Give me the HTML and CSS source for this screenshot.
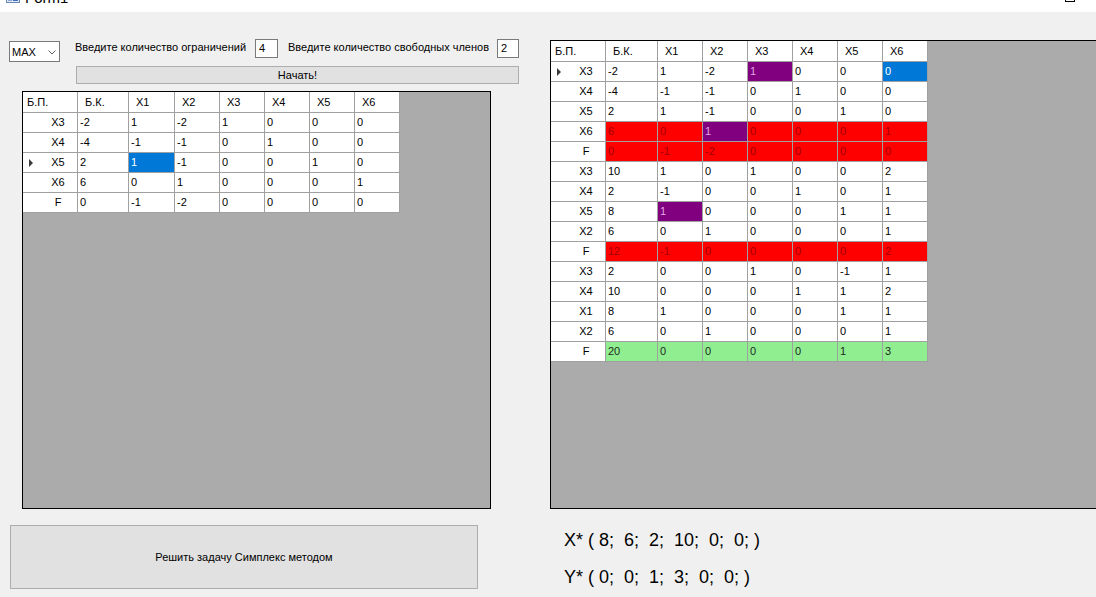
FILE: index.html
```html
<!DOCTYPE html>
<html lang="ru">
<head>
<meta charset="utf-8">
<title>Form1</title>
<link rel="stylesheet" href="styles.css">
</head>
<body>
<div class="titlebar">
  <div class="title-inner">
    <svg class="app-icon" width="14" height="12" viewBox="0 0 14 12"><rect x="0.5" y="0.5" width="13" height="11" fill="#dfe8f5" stroke="#6b86b3"/><rect x="2" y="3" width="4" height="7" fill="#8fa9d6"/><rect x="7" y="3" width="5" height="7" fill="#3d6fc2"/></svg>
    <span class="title-text">Form1</span>
    <span class="spacer"></span>
    <span class="max-box"></span>
  </div>
</div>
<div class="main">
  <div class="left">
    <div class="controls">
      <div class="combo"><span>MAX</span><svg width="8" height="5" viewBox="0 0 8 5"><path d="M0.5 0.5 L4 4 L7.5 0.5" fill="none" stroke="#606060" stroke-width="1"/></svg></div>
      <span class="label l1">Введите количество ограничений</span>
      <div class="input i1">4</div>
      <span class="label l2">Введите количество свободных членов</span>
      <div class="input i2">2</div>
    </div>
    <div class="btn start">Начать!</div>
    <div class="gridbox lbox">
      <div class="dgv dl">
        <div class="h h0">Б.П.</div><div class="h">Б.К.</div><div class="h">X1</div><div class="h">X2</div><div class="h">X3</div><div class="h">X4</div><div class="h">X5</div><div class="h">X6</div>
        <div class="rh"><span class="ind"></span><span class="rt">X3</span></div><div class="c">-2</div><div class="c">1</div><div class="c">-2</div><div class="c">1</div><div class="c">0</div><div class="c">0</div><div class="c">0</div>
        <div class="rh"><span class="ind"></span><span class="rt">X4</span></div><div class="c">-4</div><div class="c">-1</div><div class="c">-1</div><div class="c">0</div><div class="c">1</div><div class="c">0</div><div class="c">0</div>
        <div class="rh"><span class="ind"><i class="arrow"></i></span><span class="rt">X5</span></div><div class="c">2</div><div class="c b">1</div><div class="c">-1</div><div class="c">0</div><div class="c">0</div><div class="c">1</div><div class="c">0</div>
        <div class="rh"><span class="ind"></span><span class="rt">X6</span></div><div class="c">6</div><div class="c">0</div><div class="c">1</div><div class="c">0</div><div class="c">0</div><div class="c">0</div><div class="c">1</div>
        <div class="rh"><span class="ind"></span><span class="rt">F</span></div><div class="c">0</div><div class="c">-1</div><div class="c">-2</div><div class="c">0</div><div class="c">0</div><div class="c">0</div><div class="c">0</div>
      </div>
    </div>
    <div class="btn solve">Решить задачу Симплекс методом</div>
  </div>
  <div class="right">
    <div class="gridbox rbox">
      <div class="dgv dr">
        <div class="h h0">Б.П.</div><div class="h">Б.К.</div><div class="h">X1</div><div class="h">X2</div><div class="h">X3</div><div class="h">X4</div><div class="h">X5</div><div class="h">X6</div>
        <div class="rh"><span class="ind"><i class="arrow"></i></span><span class="rt">X3</span></div><div class="c">-2</div><div class="c">1</div><div class="c">-2</div><div class="c p">1</div><div class="c">0</div><div class="c">0</div><div class="c b">0</div>
        <div class="rh"><span class="ind"></span><span class="rt">X4</span></div><div class="c">-4</div><div class="c">-1</div><div class="c">-1</div><div class="c">0</div><div class="c">1</div><div class="c">0</div><div class="c">0</div>
        <div class="rh"><span class="ind"></span><span class="rt">X5</span></div><div class="c">2</div><div class="c">1</div><div class="c">-1</div><div class="c">0</div><div class="c">0</div><div class="c">1</div><div class="c">0</div>
        <div class="rh"><span class="ind"></span><span class="rt">X6</span></div><div class="c r">6</div><div class="c r">0</div><div class="c p">1</div><div class="c r">0</div><div class="c r">0</div><div class="c r">0</div><div class="c r">1</div>
        <div class="rh"><span class="ind"></span><span class="rt">F</span></div><div class="c r">0</div><div class="c r">-1</div><div class="c r">-2</div><div class="c r">0</div><div class="c r">0</div><div class="c r">0</div><div class="c r">0</div>
        <div class="rh"><span class="ind"></span><span class="rt">X3</span></div><div class="c">10</div><div class="c">1</div><div class="c">0</div><div class="c">1</div><div class="c">0</div><div class="c">0</div><div class="c">2</div>
        <div class="rh"><span class="ind"></span><span class="rt">X4</span></div><div class="c">2</div><div class="c">-1</div><div class="c">0</div><div class="c">0</div><div class="c">1</div><div class="c">0</div><div class="c">1</div>
        <div class="rh"><span class="ind"></span><span class="rt">X5</span></div><div class="c">8</div><div class="c p">1</div><div class="c">0</div><div class="c">0</div><div class="c">0</div><div class="c">1</div><div class="c">1</div>
        <div class="rh"><span class="ind"></span><span class="rt">X2</span></div><div class="c">6</div><div class="c">0</div><div class="c">1</div><div class="c">0</div><div class="c">0</div><div class="c">0</div><div class="c">1</div>
        <div class="rh"><span class="ind"></span><span class="rt">F</span></div><div class="c r">12</div><div class="c r">-1</div><div class="c r">0</div><div class="c r">0</div><div class="c r">0</div><div class="c r">0</div><div class="c r">2</div>
        <div class="rh"><span class="ind"></span><span class="rt">X3</span></div><div class="c">2</div><div class="c">0</div><div class="c">0</div><div class="c">1</div><div class="c">0</div><div class="c">-1</div><div class="c">1</div>
        <div class="rh"><span class="ind"></span><span class="rt">X4</span></div><div class="c">10</div><div class="c">0</div><div class="c">0</div><div class="c">0</div><div class="c">1</div><div class="c">1</div><div class="c">2</div>
        <div class="rh"><span class="ind"></span><span class="rt">X1</span></div><div class="c">8</div><div class="c">1</div><div class="c">0</div><div class="c">0</div><div class="c">0</div><div class="c">1</div><div class="c">1</div>
        <div class="rh"><span class="ind"></span><span class="rt">X2</span></div><div class="c">6</div><div class="c">0</div><div class="c">1</div><div class="c">0</div><div class="c">0</div><div class="c">0</div><div class="c">1</div>
        <div class="rh"><span class="ind"></span><span class="rt">F</span></div><div class="c g">20</div><div class="c g">0</div><div class="c g">0</div><div class="c g">0</div><div class="c g">0</div><div class="c g">1</div><div class="c g">3</div>
      </div>
    </div>
    <div class="results">
      <div class="res">X* ( 8;  6;  2;  10;  0;  0; )</div>
      <div class="res">Y* ( 0;  0;  1;  3;  0;  0; )</div>
    </div>
  </div>
</div>
</body>
</html>
```

FILE: styles.css
```css
* { box-sizing: border-box; }
html, body { margin: 0; padding: 0; }
body {
  width: 1096px;
  height: 597px;
  overflow: hidden;
  background: #f0f0f0;
  font-family: "Liberation Sans", Arial, sans-serif;
  font-size: 11px;
  color: #000;
}
.titlebar {
  height: 12px;
  background: #fff;
  overflow: hidden;
}
.title-inner {
  display: flex;
  align-items: center;
  height: 30px;
  margin-top: -18px;
  padding-left: 6px;
  padding-right: 21px;
}
.app-icon { display: block; }
.title-text {
  font-size: 15px;
  margin-left: 5px;
  font-family: "Liberation Sans", Arial, sans-serif;
}
.spacer { flex: 1; }
.max-box {
  width: 10px;
  height: 10px;
  border: 1px solid #000;
}
.main {
  display: flex;
  align-items: flex-start;
}
.left {
  width: 550px;
  flex: none;
  padding-top: 27px;
}
.controls {
  display: flex;
  align-items: flex-start;
  padding-left: 9px;
  height: 23px;
}
.combo {
  width: 51px;
  height: 21px;
  margin-top: 2px;
  background: #fff;
  border: 1px solid #7a7a7a;
  display: flex;
  align-items: center;
  justify-content: space-between;
  padding-left: 2px;
  padding-right: 3px;
}
.combo svg { display: block; margin-top: 1px; }
.label {
  line-height: 17px;
  white-space: nowrap;
}
.l1 { margin-left: 15px; width: 180px; }
.l2 { margin-left: 10px; width: 209px; }
.input {
  height: 19px;
  background: #fff;
  border: 1px solid #7a7a7a;
  padding-left: 3px;
  line-height: 17px;
}
.i1 { width: 23px; }
.i2 { width: 22px; }
.btn {
  background: #e1e1e1;
  border: 1px solid #adadad;
  display: flex;
  align-items: center;
  justify-content: center;
}
.start {
  margin-top: 4px;
  margin-left: 76px;
  width: 443px;
  height: 18px;
}
.gridbox {
  background: #ababab;
  border: 1px solid #000;
  overflow: hidden;
}
.lbox {
  margin-top: 7px;
  margin-left: 22px;
  width: 469px;
  height: 418px;
}
.solve {
  margin-top: 16px;
  margin-left: 10px;
  width: 468px;
  height: 64px;
}
.right {
  flex: none;
  padding-top: 28px;
}
.rbox {
  width: 560px;
  height: 469px;
}
.dgv {
  display: grid;
  width: max-content;
}
.dl { grid-template-columns: 55px 51px 46px repeat(5, 45px); }
.dr { grid-template-columns: 55px 52px repeat(6, 45px); }
.dgv > div {
  height: 20px;
  background: #fff;
  border-right: 1px solid #a0a0a0;
  border-bottom: 1px solid #a0a0a0;
  white-space: nowrap;
  overflow: hidden;
}
.dgv > .h {
  height: 21px;
  line-height: 20px;
  padding-left: 7px;
}
.dgv > .h0 { padding-left: 4px; }
.c {
  line-height: 19px;
  padding-left: 2px;
}
.rh {
  display: flex;
  align-items: center;
}
.ind {
  width: 16px;
  flex: none;
  display: flex;
  align-items: center;
  padding-left: 6px;
}
.arrow {
  display: block;
  width: 0;
  height: 0;
  border-left: 4px solid #3a3a3a;
  border-top: 4px solid transparent;
  border-bottom: 4px solid transparent;
}
.rt {
  flex: 1;
  text-align: center;
  line-height: 19px;
}
.dgv > .b { background: #0078d7; color: #fff; }
.dgv > .r { background: #ff0000; color: #a00000; }
.dgv > .p { background: #800080; color: #e0a8e0; }
.dgv > .g { background: #90ee90; color: #1e2a1e; }
.results {
  margin-top: 13px;
  padding-left: 14px;
}
.res {
  font-size: 18px;
  line-height: 37px;
  white-space: pre;
}
```
